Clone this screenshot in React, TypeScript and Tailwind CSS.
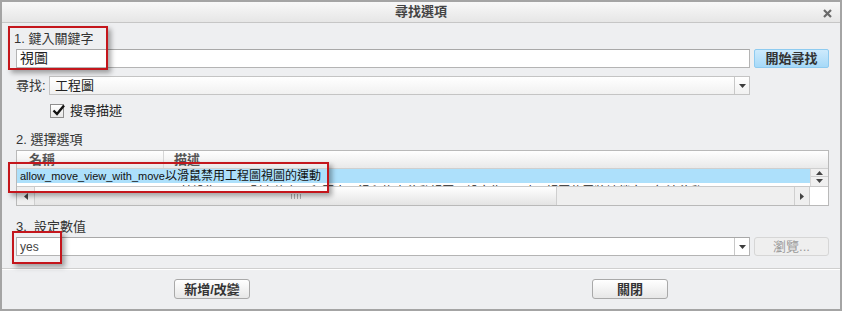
import React from 'react';

const font = "font-['Liberation_Sans','Noto_Sans_CJK_TC',sans-serif]";

function DropArrow() {
  return (
    <div className="flex w-[15px] items-center justify-center border-l border-[#c8c8c8]">
      <svg width="7" height="4" viewBox="0 0 7 4">
        <path d="M0 0 H7 L3.5 4 Z" fill="#3c3c3c" />
      </svg>
    </div>
  );
}

function RedMark({ className }: { className: string }) {
  return (
    <div
      className={`pointer-events-none absolute border-2 border-[#c4161c] shadow-[3px_3px_5px_rgba(0,0,0,0.35)] ${className}`}
    />
  );
}

function Tri({ dir }: { dir: 'up' | 'down' | 'left' | 'right' }) {
  const d = {
    up: 'M0 4 L3.5 0 L7 4 Z',
    down: 'M0 0 H7 L3.5 4 Z',
    left: 'M4 0 V7 L0 3.5 Z',
    right: 'M0 0 V7 L4 3.5 Z',
  }[dir];
  const horiz = dir === 'left' || dir === 'right';
  return (
    <svg width={horiz ? 4 : 7} height={horiz ? 7 : 4} viewBox={horiz ? '0 0 4 7' : '0 0 7 4'}>
      <path d={d} fill="#444" />
    </svg>
  );
}

function OptionList() {
  return (
    <div className="flex h-[56px] flex-col border border-[#b9b9b9] bg-white">
      {/* header */}
      <div className="flex h-[18px] shrink-0 border-b border-[#cfcfcf] bg-gradient-to-b from-white to-[#e9e9e9] text-[13px] font-bold text-[#555]">
        <div className="w-[147px] border-r border-[#d6d6d6] pl-[12px] leading-[18px]">名稱</div>
        <div className="pl-[10px] leading-[18px]">描述</div>
      </div>
      {/* rows + vertical scrollbar */}
      <div className="flex h-[17px] shrink-0">
        <div className="flex-1 overflow-hidden">
          <div className="flex h-[14px] items-center bg-[#ade0fb] text-[#111] whitespace-nowrap">
            <div className="w-[148px] shrink-0 pl-[3px] text-[11px]">allow_move_view_with_move</div>
            <div className="text-[12px]">以滑鼠禁用工程圖視圖的運動</div>
          </div>
          <div className="flex h-[14px] items-start whitespace-nowrap text-[12px] text-[#222]">
            <div className="w-[148px] shrink-0 pl-[60px]">yes</div>
            <div>※ 若設為 yes，則允許在工程圖中以滑鼠拖曳移動視圖；設定為 no 時，視圖位置將被鎖定而無法移動。</div>
          </div>
        </div>
        <div className="flex w-[18px] shrink-0 flex-col border-l border-[#d8d8d8] bg-[#f0f0f0]">
          <div className="flex h-[8px] items-center justify-center border-b border-[#cfcfcf]">
            <Tri dir="up" />
          </div>
          <div className="flex h-[8px] items-center justify-center">
            <Tri dir="down" />
          </div>
        </div>
      </div>
      {/* horizontal scrollbar */}
      <div className="flex flex-1 border-t border-[#c9c9c9]">
        <div className="flex w-[18px] items-center justify-center border-r border-[#cfcfcf] bg-[#efefef]">
          <Tri dir="left" />
        </div>
        <div className="flex w-[522px] items-center justify-center border-r border-[#cfcfcf] bg-gradient-to-b from-white to-[#e4e4e4]">
          <div className="flex gap-[2px]">
            <div className="h-[5px] w-[1px] bg-[#aaa]" />
            <div className="h-[5px] w-[1px] bg-[#aaa]" />
            <div className="h-[5px] w-[1px] bg-[#aaa]" />
            <div className="h-[5px] w-[1px] bg-[#aaa]" />
          </div>
        </div>
        <div className="flex-1 bg-[#efefef]" />
        <div className="flex w-[16px] items-center justify-center border-x border-[#cfcfcf] bg-[#efefef]">
          <Tri dir="right" />
        </div>
        <div className="w-[18px] bg-white" />
      </div>
    </div>
  );
}

export default function App() {
  return (
    <div className={`relative h-[313px] w-[844px] bg-white ${font}`}>
      <div className="flex h-[311px] w-[842px] flex-col border-2 border-[#a4a4a4] bg-[#eeeff1]">
        {/* title bar */}
        <div className="relative flex h-[21px] shrink-0 items-center justify-center border-b border-[#c6c6c6] bg-gradient-to-b from-[#f8f8f8] to-[#e6e6e6]">
          <span className="text-[13px] font-bold text-[#444]">尋找選項</span>
          <svg className="absolute right-[8px] top-[7px]" width="9" height="9" viewBox="0 0 9 9">
            <path d="M1 1 L8 8 M8 1 L1 8" stroke="#6a6a6a" strokeWidth="2.2" />
          </svg>
        </div>

        <div className="flex flex-1 flex-col pl-[14px] pr-[11px] text-[13px] text-[#333]">
          {/* 1 */}
          <div className="mt-[8px] h-[16px] pl-[-2px] leading-[16px]">
            <span className="-ml-[2px]">1. 鍵入關鍵字</span>
          </div>
          <div className="mt-[2px] flex h-[19px] gap-[4px]">
            <div className="flex flex-1 items-center border border-[#b4b4b4] border-t-[#a8a8a8] bg-white pl-[3px] text-[14px] text-[#222]">
              視圖
            </div>
            <button className="w-[75px] rounded-[2px] border border-[#8ecbf0] bg-gradient-to-b from-[#cdeafc] to-[#a6d9f8] text-[13px] font-bold leading-none text-[#333]">
              開始尋找
            </button>
          </div>

          {/* find in */}
          <div className="mt-[8px] flex h-[19px] items-center pr-[79px]">
            <span className="w-[33px] shrink-0">尋找:</span>
            <div className="flex h-full flex-1 border border-[#c4c4c4] bg-gradient-to-b from-white to-[#f1f1f1]">
              <div className="flex flex-1 items-center pl-[5px] text-[#222]">工程圖</div>
              <DropArrow />
            </div>
          </div>

          {/* checkbox */}
          <div className="mt-[9px] flex h-[14px] items-center pl-[34px]">
            <div className="relative h-[14px] w-[14px] border border-[#8e8e8e] bg-gradient-to-b from-white to-[#e8e8e8]">
              <svg className="absolute left-[1px] top-[-1px]" width="13" height="13" viewBox="0 0 13 13">
                <path d="M1.5 6.5 L5 10 L12 1.5" stroke="#111" strokeWidth="2.4" fill="none" />
              </svg>
            </div>
            <span className="ml-[6px] text-[#222]">搜尋描述</span>
          </div>

          {/* 2 */}
          <div className="mt-[14px] h-[16px] leading-[16px]">2. 選擇選項</div>
          <div className="mt-[2px]">
            <OptionList />
          </div>

          {/* 3 */}
          <div className="mt-[13px] h-[16px] leading-[16px]">3.&nbsp;&nbsp;設定數值</div>
          <div className="mt-[2px] flex h-[19px] gap-[4px]">
            <div className="flex flex-1 border border-[#b4b4b4] border-t-[#a8a8a8] bg-white">
              <div className="flex flex-1 items-center pl-[3px] text-[12px] text-[#444]">yes</div>
              <DropArrow />
            </div>
            <button className="w-[75px] rounded-[3px] border border-[#d6d6d6] bg-[#efefef] text-[13px] leading-none text-[#9a9a9a]">
              瀏覽...
            </button>
          </div>
        </div>

        {/* footer */}
        <div className="mt-[11px] flex h-[41px] shrink-0 border-t border-[#cfcfcf] pt-[10px] shadow-[inset_0_1px_0_#fff]">
          <button className="ml-[172px] h-[20px] w-[76px] rounded-[3px] border border-[#a9a9a9] bg-gradient-to-b from-white to-[#e7e7e7] text-[13px] font-bold leading-none text-[#333]">
            新增/改變
          </button>
          <button className="ml-[342px] h-[20px] w-[76px] rounded-[3px] border border-[#a9a9a9] bg-gradient-to-b from-white to-[#e7e7e7] text-[13px] font-bold leading-none text-[#333]">
            關閉
          </button>
        </div>
      </div>

      {/* annotation marks */}
      <RedMark className="left-[8px] top-[26px] h-[44px] w-[100px]" />
      <RedMark className="left-[8px] top-[162px] h-[31px] w-[321px]" />
      <RedMark className="left-[12px] top-[231px] h-[33px] w-[50px]" />
    </div>
  );
}
